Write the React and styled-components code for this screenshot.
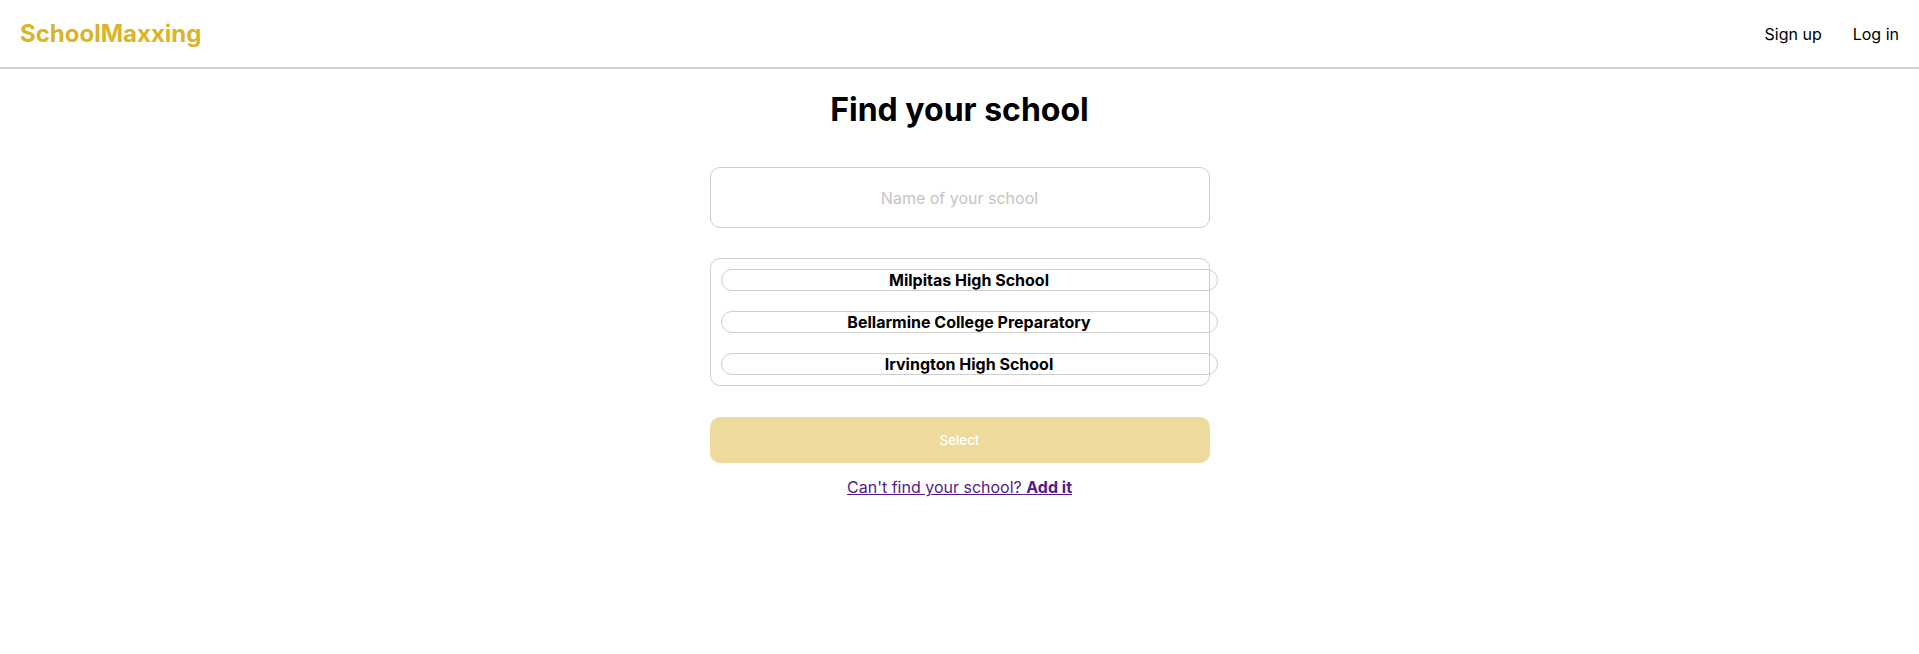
import React from 'react';
import styled, { createGlobalStyle } from 'styled-components';

const GlobalStyle = createGlobalStyle`
  body {
    margin: 0;
    background: #fff;
    font-family: 'Inter', 'Liberation Sans', sans-serif;
    color: #000;
  }
`;

const Header = styled.header`
  display: flex;
  justify-content: space-between;
  align-items: center;
  height: 67px;
  padding: 0 20px;
  border-bottom: 2px solid #d0d0d0;
`;

const Logo = styled.div`
  font-size: 24px;
  font-weight: 700;
  color: #dab42a;
`;

const Nav = styled.nav`
  display: flex;
  gap: 31px;
  a {
    color: #000;
    text-decoration: none;
    font-size: 16px;
  }
`;

const Main = styled.main`
  display: flex;
  flex-direction: column;
  align-items: center;
`;

const Title = styled.h1`
  margin: 21px 0 0;
  font-size: 32px;
  font-weight: 700;
  line-height: 40px;
`;

const Form = styled.div`
  width: 500px;
  display: flex;
  flex-direction: column;
  margin-top: 37px;
`;

const SearchInput = styled.input`
  box-sizing: border-box;
  width: 500px;
  height: 61px;
  border: 1px solid #cfcfcf;
  border-radius: 10px;
  text-align: center;
  font-family: 'Inter', 'Liberation Sans', sans-serif;
  font-size: 16px;
  outline: none;
  &::placeholder {
    color: #c4c4c4;
  }
`;

const ResultList = styled.ul`
  box-sizing: border-box;
  width: 500px;
  margin: 30px 0 0;
  padding: 10px;
  list-style: none;
  border: 1px solid #cfcfcf;
  border-radius: 10px;
  display: flex;
  flex-direction: column;
  gap: 20px;
`;

const ResultItem = styled.li`
  box-sizing: border-box;
  width: 497px;
  flex-shrink: 0;
  height: 22px;
  border: 1px solid #cfcfcf;
  border-radius: 11px;
  display: flex;
  align-items: center;
  justify-content: center;
  font-size: 16px;
  font-weight: 700;
  cursor: pointer;
`;

const SelectButton = styled.button`
  margin-top: 31px;
  height: 46px;
  border: none;
  border-radius: 10px;
  background: #eeda9c;
  color: #fff;
  font-family: 'Inter', 'Liberation Sans', sans-serif;
  font-size: 13.3px;
  font-weight: 500;
`;

const AddLink = styled.a`
  margin-top: 14px;
  align-self: center;
  color: #551a8b;
  font-size: 16px;
  text-decoration: underline;
  b {
    font-weight: 700;
  }
`;

const schools = ['Milpitas High School', 'Bellarmine College Preparatory', 'Irvington High School'];

export default function App() {
  return (
    <>
      <GlobalStyle />
      <Header>
        <Logo>SchoolMaxxing</Logo>
        <Nav>
          <a href="#">Sign up</a>
          <a href="#">Log in</a>
        </Nav>
      </Header>
      <Main>
        <Title>Find your school</Title>
        <Form>
          <SearchInput placeholder="Name of your school" />
          <ResultList>
            {schools.map((s) => (
              <ResultItem key={s}>{s}</ResultItem>
            ))}
          </ResultList>
          <SelectButton disabled>Select</SelectButton>
          <AddLink href="#">
            Can't find your school? <b>Add it</b>
          </AddLink>
        </Form>
      </Main>
    </>
  );
}
